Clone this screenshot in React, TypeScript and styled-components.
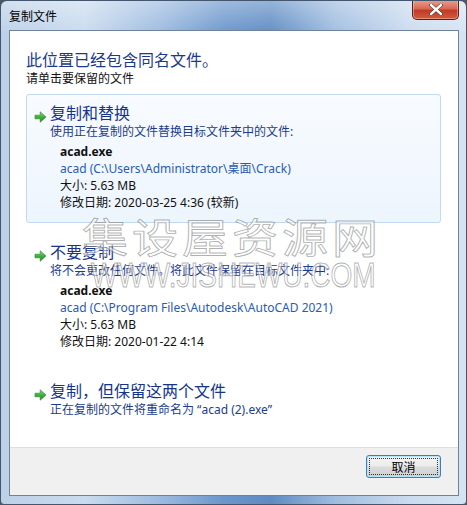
import React from 'react';
import styled, { createGlobalStyle } from 'styled-components';

const GlobalStyle = createGlobalStyle`
  html, body {
    margin: 0;
    padding: 0;
    background: #4a5868;
  }
  body {
    font-family: "Noto Sans", "Noto Sans CJK SC", sans-serif;
  }
`;

const uiFont = `"Noto Sans", "Noto Sans CJK SC", sans-serif`;

const Window = styled.div`
  position: relative;
  width: 467px;
  height: 505px;
  box-sizing: border-box;
  display: flex;
  flex-direction: column;
  padding: 0 7px 8px 8px;
  border: 1px solid #44566e;
  border-radius: 7px 7px 4px 4px;
  overflow: hidden;
  background:
    linear-gradient(to bottom, rgba(255, 255, 255, 0.35) 0px, rgba(255, 255, 255, 0.05) 30px, rgba(255, 255, 255, 0) 31px),
    linear-gradient(to right, #bcd0e8 0%, #c9dbee 18%, #9dbbe0 34%, #6a96cb 48%, #5e8bc3 58%, #9fbde0 72%, #cbdcef 88%, #d6e4f2 100%);
`;

const TitleBar = styled.div`
  height: 30px;
  display: flex;
  align-items: flex-start;
  flex-shrink: 0;
  margin-top: -1px;
`;

const TitleText = styled.div`
  font-family: ${uiFont};
  font-size: 12px;
  line-height: 16px;
  color: #000;
  margin: 9px 0 0 0;
`;

const CloseButton = styled.div`
  margin-left: auto;
  width: 47px;
  height: 20px;
  box-sizing: border-box;
  border: 1px solid #5b1f18;
  border-top: none;
  border-radius: 0 0 5px 5px;
  background: linear-gradient(to bottom, #e8a08f 0%, #d86a55 45%, #c23a28 55%, #d45a3e 100%);
  box-shadow: inset 0 0 0 1px rgba(255, 210, 200, 0.45);
  display: flex;
  align-items: center;
  justify-content: center;
`;

const Client = styled.div`
  flex: 1;
  display: flex;
  flex-direction: column;
  border: 1px solid #6f829a;
  background: #fff;
`;

const Content = styled.div`
  flex: 1;
  padding: 18px 17px 0 16px;
`;

const Heading = styled.div`
  font-family: ${uiFont};
  font-size: 16px;
  line-height: 22px;
  color: #1d3a8a;
`;

const Instruction = styled.div`
  font-family: ${uiFont};
  font-size: 12px;
  line-height: 16px;
  color: #111;
`;

const OptionList = styled.div`
  display: flex;
  flex-direction: column;
  gap: 10px;
  margin-top: 7px;
`;

const Option = styled.div<{ $boxed?: boolean }>`
  display: grid;
  grid-template-columns: 13px 1fr;
  column-gap: 3px;
  box-sizing: border-box;
  padding: 8px 10px 11px 7px;
  border: 1px solid ${p => (p.$boxed ? '#c3d9ef' : 'transparent')};
  border-radius: 3px;
  background: ${p => (p.$boxed ? 'linear-gradient(to bottom, #f8fbff 0%, #edf5fd 100%)' : 'transparent')};
`;

const ArrowCell = styled.div`
  height: 20px;
  display: flex;
  align-items: flex-end;
`;

const OptionTitle = styled.div`
  font-family: ${uiFont};
  font-size: 16px;
  line-height: 20px;
  color: #16358a;
`;

const OptionNote = styled.div`
  grid-column: 2;
  font-family: ${uiFont};
  font-size: 12px;
  line-height: 17px;
  color: #1a3c8c;
`;

const Details = styled.div`
  grid-column: 2;
  margin: 3px 0 0 10px;
  font-family: ${uiFont};
  font-size: 12px;
  line-height: 17px;
  color: #111;
`;

const FileName = styled.div`
  font-weight: 700;
`;

const FilePath = styled.div`
  color: #2a5cae;
`;

const Footer = styled.div`
  height: 40px;
  flex-shrink: 0;
  display: flex;
  justify-content: flex-end;
  align-items: flex-start;
  padding: 7px 17px 0 0;
  border-top: 1px solid #dfdfdf;
  background: #f0f0f0;
`;

const Button = styled.div`
  position: relative;
  width: 75px;
  height: 23px;
  box-sizing: border-box;
  border: 1px solid #3c7fb1;
  border-radius: 3px;
  background: linear-gradient(to bottom, #f4f4f4 0%, #ececec 48%, #dcdcdc 52%, #cfcfcf 100%);
  box-shadow: inset 0 0 0 1px #b7e3f9;
  display: flex;
  align-items: center;
  justify-content: center;
  font-family: ${uiFont};
  font-size: 12px;
  color: #000;

  &::after {
    content: '';
    position: absolute;
    inset: 2px;
    border: 1px dotted #333;
  }
`;

const Watermark = styled.div`
  position: absolute;
  left: 0;
  top: 0;
  pointer-events: none;
  font-family: "Noto Sans CJK SC", sans-serif;
  color: rgba(255, 255, 255, 0.55);
  -webkit-text-stroke: 1px rgba(110, 110, 110, 0.55);
`;

const WatermarkCn = styled.div`
  position: absolute;
  left: 81px;
  top: 206px;
  font-size: 46px;
  line-height: 56px;
  letter-spacing: 4px;
  white-space: nowrap;
  transform: scaleY(0.88);
  transform-origin: left center;
`;

const WatermarkEn = styled.div`
  position: absolute;
  left: 90px;
  top: 254px;
  font-family: "Liberation Sans", sans-serif;
  font-size: 35px;
  line-height: 40px;
  white-space: nowrap;
  transform: scaleX(0.8);
  transform-origin: left center;
`;

const GreenArrow = () => (
  <svg width="13" height="12" viewBox="0 0 13 12">
    <defs>
      <linearGradient id="ga" x1="0" y1="0" x2="0" y2="1">
        <stop offset="0" stopColor="#8fdc7e" />
        <stop offset="0.5" stopColor="#3bb33a" />
        <stop offset="1" stopColor="#1f8a24" />
      </linearGradient>
    </defs>
    <path d="M1 4.2 H6.2 V0.8 L12 6 L6.2 11.2 V7.8 H1 Z" fill="url(#ga)" stroke="#2a7f2a" strokeWidth="0.6" strokeLinejoin="round" />
  </svg>
);

const CloseGlyph = () => (
  <svg width="14" height="11" viewBox="0 0 14 11">
    <path d="M2 1 L12 10 M12 1 L2 10" stroke="#5a2118" strokeWidth="3.6" strokeLinecap="round" />
    <path d="M2 1 L12 10 M12 1 L2 10" stroke="#fff" strokeWidth="2.4" strokeLinecap="round" />
  </svg>
);

interface FileInfo {
  name: string;
  path: string;
  size: string;
  modified: string;
}

const options: { title: string; note: string; file?: FileInfo; boxed?: boolean }[] = [
  {
    title: '复制和替换',
    note: '使用正在复制的文件替换目标文件夹中的文件:',
    boxed: true,
    file: {
      name: 'acad.exe',
      path: 'acad (C:\\Users\\Administrator\\桌面\\Crack)',
      size: '5.63 MB',
      modified: '2020-03-25 4:36 (较新)',
    },
  },
  {
    title: '不要复制',
    note: '将不会更改任何文件。将此文件保留在目标文件夹中:',
    file: {
      name: 'acad.exe',
      path: 'acad (C:\\Program Files\\Autodesk\\AutoCAD 2021)',
      size: '5.63 MB',
      modified: '2020-01-22 4:14',
    },
  },
  {
    title: '复制，但保留这两个文件',
    note: '正在复制的文件将重命名为 “acad (2).exe”',
  },
];

export default function App() {
  return (
    <>
      <GlobalStyle />
      <Window>
        <TitleBar>
          <TitleText>复制文件</TitleText>
          <CloseButton>
            <CloseGlyph />
          </CloseButton>
        </TitleBar>

        <Client>
          <Content>
            <Heading>此位置已经包含同名文件。</Heading>
            <Instruction>请单击要保留的文件</Instruction>

            <OptionList>
              {options.map(opt => (
                <Option key={opt.title} $boxed={opt.boxed}>
                  <ArrowCell>
                    <GreenArrow />
                  </ArrowCell>
                  <OptionTitle>{opt.title}</OptionTitle>
                  <OptionNote>{opt.note}</OptionNote>
                  {opt.file && (
                    <Details>
                      <FileName>{opt.file.name}</FileName>
                      <FilePath>{opt.file.path}</FilePath>
                      <div>大小: {opt.file.size}</div>
                      <div>修改日期: {opt.file.modified}</div>
                    </Details>
                  )}
                </Option>
              ))}
            </OptionList>
          </Content>

          <Footer>
            <Button>取消</Button>
          </Footer>
        </Client>

        <Watermark>
          <WatermarkCn>集设屋资源网</WatermarkCn>
          <WatermarkEn>WWW.JISHEWU.COM</WatermarkEn>
        </Watermark>
      </Window>
    </>
  );
}
